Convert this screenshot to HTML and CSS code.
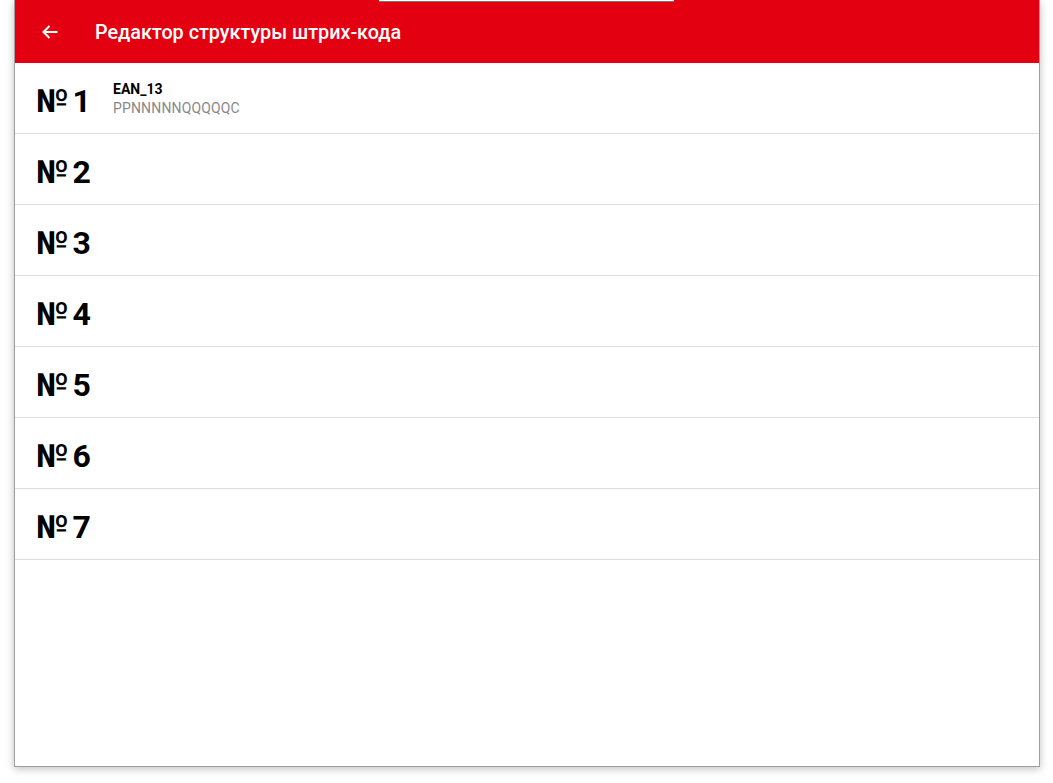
FILE: index.html
```html
<!DOCTYPE html>
<html lang="ru">
<head>
    <meta charset="UTF-8">
    <title>Редактор структуры штрих-кода</title>
    <link rel="stylesheet" href="styles.css">
</head>
<body>
    <div class="top-strip"></div>
    <div class="panel">
        <div class="toolbar">
            <svg class="back" width="16" height="16" viewBox="0 0 16 16">
                <path d="M15.5 8H1.5M7.5 2L1.5 8l6 6" fill="none" stroke="#fff" stroke-width="2"/>
            </svg>
            <span class="title">Редактор структуры штрих-кода</span>
        </div>
        <ul class="slots">
            <li class="slot">
                <span class="num">№ 1</span>
                <div class="info">
                    <div class="code-name">EAN_13</div>
                    <div class="code-mask">PPNNNNNQQQQQC</div>
                </div>
            </li>
            <li class="slot"><span class="num">№ 2</span></li>
            <li class="slot"><span class="num">№ 3</span></li>
            <li class="slot"><span class="num">№ 4</span></li>
            <li class="slot"><span class="num">№ 5</span></li>
            <li class="slot"><span class="num">№ 6</span></li>
            <li class="slot"><span class="num">№ 7</span></li>
        </ul>
    </div>
</body>
</html>
```

FILE: styles.css
```css
body {
    margin: 0;
    background: #fff;
    font-family: Roboto, "Noto Sans", sans-serif;
    height: 783px;
    overflow: hidden;
}
.top-strip {
    position: absolute;
    left: 379px;
    top: 0;
    width: 295px;
    height: 1px;
    background: #fff;
    border-bottom: 1px solid #777;
    z-index: 2;
}
.panel {
    margin-left: 14px;
    width: 1024px;
    height: 766px;
    background: #fff;
    border: 1px solid #9e9e9e;
    border-top: none;
    box-shadow: 0 2px 8px rgba(0, 0, 0, 0.25);
    display: flex;
    flex-direction: column;
}
.toolbar {
    height: 63px;
    background: #e30010;
    display: flex;
    align-items: center;
    padding-left: 27px;
    box-sizing: border-box;
}
.back {
    margin-right: 37px;
}
.title {
    color: #fff;
    font-size: 19.8px;
    font-weight: 500;
    padding-top: 1px;
}
.slots {
    list-style: none;
    margin: 0;
    padding: 0;
}
.slot {
    height: 70px;
    border-bottom: 1px solid #ddd;
    display: flex;
    align-items: center;
    padding-left: 21px;
}
.num {
    width: 77px;
    font-size: 32px;
    font-weight: 700;
    color: #000;
    word-spacing: -4px;
    padding-top: 6px;
}
.info {
    padding-top: 1px;
}
.code-name {
    font-size: 14px;
    font-weight: 700;
    color: #000;
    margin-bottom: 3px;
}
.code-mask {
    font-size: 14px;
    letter-spacing: 0.15px;
    color: #888;
}
```
